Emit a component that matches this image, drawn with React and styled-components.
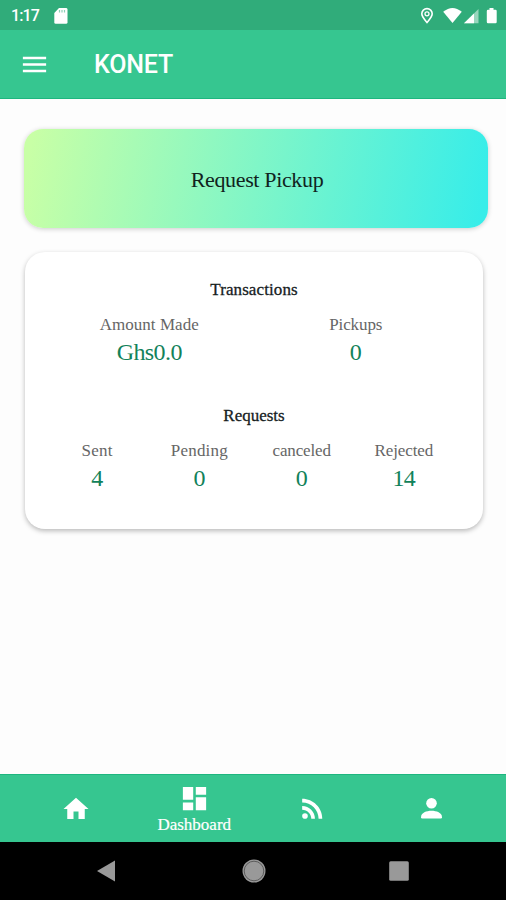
import styled, { createGlobalStyle } from "styled-components";
import { MdDashboard, MdHome, MdMenu, MdRssFeed } from "react-icons/md";

const GlobalStyle = createGlobalStyle`
    * {
        box-sizing: border-box;
    }
    body {
        margin: 0;
        background: #fdfdfd;
        font-family: "Liberation Serif", serif;
    }
`;

const Screen = styled.div`
    display: flex;
    flex-direction: column;
    width: 506px;
    height: 900px;
    overflow: hidden;
    background: #fdfdfd;
`;

const StatusBar = styled.div`
    display: flex;
    align-items: center;
    flex: 0 0 30px;
    padding: 1px 8px 0 11px;
    background: #30ac7a;
    color: #fff;
`;

const Clock = styled.span`
    width: 43px;
    font: 500 16px/20px Roboto, sans-serif;
    letter-spacing: -0.9px;
`;

const StatusIcons = styled.div`
    display: flex;
    align-items: center;
    margin-left: auto;
`;

const AppBar = styled.header`
    display: flex;
    align-items: center;
    flex: 0 0 69px;
    padding: 0 19px;
    background: #36c690;
    border-bottom: 1px solid #1eb67f;
    color: #fff;
`;

const Title = styled.h1`
    margin: 0 0 0 44px;
    padding-top: 2px;
    font: 500 25px/30px Roboto, sans-serif;
    letter-spacing: -0.2px;
`;

const Content = styled.main`
    flex: 1;
    padding: 30px 18px 0 24px;
`;

const PickupButton = styled.button`
    display: block;
    width: 464px;
    height: 99px;
    padding: 2px 0 0 2px;
    border: 0;
    border-radius: 19px;
    background: linear-gradient(100deg, #c8ffa6 2%, #37ede9 98%);
    box-shadow: 0 1px 5px rgba(0, 0, 0, 0.2);
    color: #10231d;
    font: 22px/26px "Liberation Serif", serif;
    letter-spacing: -0.35px;
`;

const Card = styled.section`
    width: 458px;
    height: 277px;
    margin: 24px 0 0 1px;
    padding: 28px 21px 0;
    border-radius: 20px;
    background: #fff;
    box-shadow: 0 2px 5px rgba(0, 0, 0, 0.27);
`;

const Heading = styled.h2`
    margin: 0;
    font-size: 17px;
    line-height: 20px;
    font-weight: 400;
    text-align: center;
    color: #17211e;
    -webkit-text-stroke: 0.3px #17211e;
    letter-spacing: ${({$spacing}) => $spacing || 0}px;
`;

const StatRow = styled.div`
    display: grid;
    grid-template-columns: repeat(${({$columns}) => $columns}, 1fr);
    width: ${({$width}) => $width}px;
    margin: 15px 0 ${({$gap}) => $gap || 0}px;
`;

const Stat = styled.div`
    display: flex;
    flex-direction: column;
    align-items: center;
`;

const StatLabel = styled.span`
    font-size: 17px;
    line-height: 20px;
    color: #666;
    letter-spacing: ${({$spacing}) => $spacing || 0}px;
`;

const StatValue = styled.span`
    margin-top: 3px;
    font-size: 24px;
    line-height: 28px;
    color: #12825a;
    letter-spacing: ${({$spacing}) => $spacing || 0}px;
`;

const TabBar = styled.nav`
    display: grid;
    grid-template-columns: repeat(4, 118.5px);
    justify-content: center;
    flex: 0 0 68px;
    padding-left: 1px;
    background: #36c690;
    border-top: 1px solid #1eb67f;
`;

const Tab = styled.a`
    display: flex;
    flex-direction: column;
    align-items: center;
    justify-content: center;
    color: #fff;
`;

const TabLabel = styled.span`
    margin-top: 1px;
    font-size: 17px;
    line-height: 19px;
    -webkit-text-stroke: 0.2px #fff;
`;

const SystemBar = styled.div`
    display: flex;
    align-items: center;
    justify-content: space-between;
    flex: 0 0 58px;
    padding: 0 96px 0 95px;
    background: #000;
`;

const HomeButton = styled.svg`
    margin-left: 3px;
`;

const totals = [
    {label: "Amount Made", value: "Ghs0.0", spacing: 0.05, valueSpacing: -0.6},
    {label: "Pickups", value: "0", spacing: -0.1},
];

const requests = [
    {label: "Sent", value: "4", spacing: 0.2},
    {label: "Pending", value: "0", spacing: 0.2},
    {label: "canceled", value: "0", spacing: -0.15},
    {label: "Rejected", value: "14", spacing: -0.1, valueSpacing: -0.6},
];

function Stats({items, width, gap}) {
    return (
        <StatRow $columns={items.length} $width={width} $gap={gap}>
            {items.map(({label, value, spacing, valueSpacing}) => (
                <Stat key={label}>
                    <StatLabel $spacing={spacing}>{label}</StatLabel>
                    <StatValue $spacing={valueSpacing}>{value}</StatValue>
                </Stat>
            ))}
        </StatRow>
    )
}

function SdCardIcon() {
    return (
        <svg width="14" height="16" viewBox="0 0 14 16">
            <path fill="#fff" d="M5 0h7.3Q13.5 0 13.5 1.5v12.7q0 1.5-1.5 1.5H1.7Q.3 15.7.3 14.2V5z"/>
            <path stroke="#30ac7a" strokeOpacity=".55" strokeWidth="1.2" d="M5.5 2v2.5M8 2v2.5M10.5 2v2.5"/>
        </svg>
    )
}

function SignalIcons() {
    return (
        <svg width="78" height="20" viewBox="0 0 78 20">
            <path fill="none" stroke="#fff" strokeWidth="1.6" d="M7 16.5C4 13 1.8 10.6 1.8 7.8a5.2 5.2 0 0 1 10.4 0C12.2 10.6 10 13 7 16.5z"/>
            <circle cx="7" cy="7.8" r="2" fill="none" stroke="#fff" strokeWidth="1.3"/>
            <path fill="#fff" d="M23.2 5.8Q32.5-2 41.8 5.8L32.5 17z"/>
            <path fill="#fff" fillOpacity=".5" d="M58.5 3V17.3H44z"/>
            <path fill="#fff" d="M54 7.4V17.3H44z"/>
            <path fill="#fff" d="M69.5 2h4v1.7h2q1.2 0 1.2 1.2v11q0 1.3-1.2 1.3h-7.5q-1.2 0-1.2-1.3v-11q0-1.2 1.2-1.2h1.5z"/>
        </svg>
    )
}

function PersonIcon() {
    return (
        <svg width="31" height="31" viewBox="0 0 31 31">
            <circle cx="15.5" cy="10.2" r="5.3" fill="#fff"/>
            <path fill="#fff" d="M5 24.2C5 19.8 10.5 17.8 15.5 17.8S26 19.8 26 24.2q0 1.3-1.3 1.3H6.3Q5 25.5 5 24.2z"/>
        </svg>
    )
}

function App() {
    return (
        <>
            <GlobalStyle/>
            <Screen>
                <StatusBar>
                    <Clock>1:17</Clock>
                    <SdCardIcon/>
                    <StatusIcons><SignalIcons/></StatusIcons>
                </StatusBar>
                <AppBar>
                    <MdMenu size={31}/>
                    <Title>KONET</Title>
                </AppBar>
                <Content>
                    <PickupButton>Request Pickup</PickupButton>
                    <Card>
                        <Heading $spacing={0.1}>Transactions</Heading>
                        <Stats items={totals} width={413} gap={40}/>
                        <Heading>Requests</Heading>
                        <Stats items={requests} width={409}/>
                    </Card>
                </Content>
                <TabBar>
                    <Tab><MdHome size={30}/></Tab>
                    <Tab>
                        <MdDashboard size={31}/>
                        <TabLabel>Dashboard</TabLabel>
                    </Tab>
                    <Tab><MdRssFeed size={31}/></Tab>
                    <Tab><PersonIcon/></Tab>
                </TabBar>
                <SystemBar>
                    <svg width="21" height="24" viewBox="0 0 21 24">
                        <path fill="#999" d="M2 12 20 1.5v21z"/>
                    </svg>
                    <HomeButton width="24" height="24" viewBox="0 0 24 24">
                        <circle cx="12" cy="12" r="11.5" fill="#999"/>
                        <circle cx="12" cy="12" r="9.8" fill="none" stroke="#555" strokeWidth="0.9"/>
                    </HomeButton>
                    <svg width="22" height="24" viewBox="0 0 22 24">
                        <rect x="1.2" y="2.2" width="19.6" height="19.6" rx="1.5" fill="#999"/>
                    </svg>
                </SystemBar>
            </Screen>
        </>
    )
}

export default App
